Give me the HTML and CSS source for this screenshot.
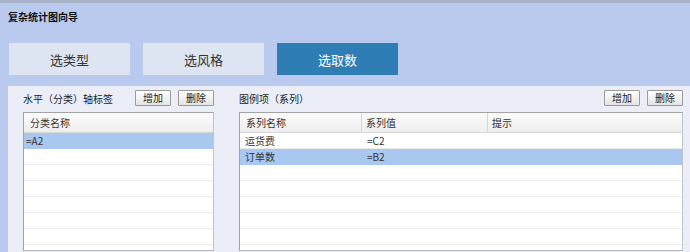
FILE: index.html
```html
<!DOCTYPE html>
<html lang="zh-CN">
<head>
<meta charset="utf-8">
<title>复杂统计图向导</title>
<link rel="stylesheet" href="styles.css">
</head>
<body>
<div class="wizard">
  <div class="title">复杂统计图向导</div>
  <div class="tabs">
    <div class="tab">选类型</div>
    <div class="tab">选风格</div>
    <div class="tab active">选取数</div>
  </div>
  <div class="content">
    <div class="col col-left">
      <div class="toolbar">
        <span class="label">水平（分类）轴标签</span>
        <button class="btn first">增加</button>
        <button class="btn">删除</button>
      </div>
      <div class="grid">
        <div class="row head"><div class="cell">分类名称</div></div>
        <div class="row sel"><div class="cell data">=A2</div></div>
        <div class="row"></div>
        <div class="row"></div>
        <div class="row"></div>
        <div class="row"></div>
        <div class="row"></div>
        <div class="row"></div>
        <div class="row"></div>
      </div>
    </div>
    <div class="col col-right">
      <div class="toolbar">
        <span class="label">图例项（系列）</span>
        <button class="btn first">增加</button>
        <button class="btn">删除</button>
      </div>
      <div class="grid">
        <div class="row head">
          <div class="cell c1">系列名称</div>
          <div class="cell c2">系列值</div>
          <div class="cell c3">提示</div>
        </div>
        <div class="row">
          <div class="cell data c1">运货费</div>
          <div class="cell data c2">=C2</div>
          <div class="cell data c3"></div>
        </div>
        <div class="row sel">
          <div class="cell data c1">订单数</div>
          <div class="cell data c2">=B2</div>
          <div class="cell data c3"></div>
        </div>
        <div class="row"></div>
        <div class="row"></div>
        <div class="row"></div>
        <div class="row"></div>
        <div class="row"></div>
        <div class="row"></div>
      </div>
    </div>
  </div>
</div>
</body>
</html>
```
FILE: styles.css
```css
html, body {
  margin: 0;
  padding: 0;
}
body {
  font-family: "Noto Sans CJK SC", "Liberation Sans", sans-serif;
  color: #222;
  background: #b9caee;
}
.wizard {
  height: 249px;
  background: #b9caee;
  border-top: 3px solid #a9b4c9;
  overflow: hidden;
}
.title {
  font-size: 10px;
  font-weight: bold;
  line-height: 12px;
  padding: 8px 0 0 8px;
  height: 12px;
  color: #111;
}
.tabs {
  display: flex;
  gap: 13px;
  margin: 20px 0 0 9px;
}
.tab {
  width: 121px;
  height: 32px;
  display: flex;
  align-items: center;
  justify-content: center;
  background: #dde5f2;
  color: #333;
  font-size: 13px;
}
.tab.active {
  background: #2f7db5;
  color: #fff;
}
.content {
  margin: 11px 0 0 8px;
  height: 166px;
  background: #eceef7;
  display: flex;
  gap: 25px;
  padding: 4px 7px 0 15px;
  box-sizing: border-box;
}
.col {
  display: flex;
  flex-direction: column;
}
.col-left {
  width: 191px;
}
.col-right {
  flex: 1;
}
.toolbar {
  display: flex;
  align-items: center;
  height: 16px;
  gap: 7px;
}
.label {
  font-size: 10px;
  color: #222;
  margin-left: 0;
}
.btn {
  width: 36px;
  height: 16px;
  padding: 0;
  margin: 0;
  border: 1px solid #9a9a9a;
  border-radius: 1px;
  background: linear-gradient(#ffffff, #e4e4e4);
  font-family: inherit;
  font-size: 10px;
  line-height: 14px;
  color: #222;
}
.btn.first {
  margin-left: auto;
}
.grid {
  margin-top: 6px;
  height: 139px;
  box-sizing: border-box;
  border: 1px solid #a3a3a3;
  border-right-color: #c4c4c4;
  border-bottom-color: #b8b8b8;
  background: #fff;
  overflow: hidden;
}
.row {
  display: flex;
  height: 15px;
  border-bottom: 1px solid #ececec;
}
.row.head {
  height: 19px;
  border-bottom: 1px solid #d6d6d6;
  background: linear-gradient(#fbfbfb, #eeeeee);
}
.row.sel {
  background: #a9c7ef;
  border-bottom-color: #a9c7ef;
}
.cell {
  font-size: 10px;
  line-height: 15px;
  color: #333;
  padding-left: 6px;
  white-space: nowrap;
}
.head .cell {
  line-height: 19px;
}
.cell.data {
  padding-left: 2px;
}
.col-right .cell.data {
  padding-left: 5px;
}
.c1 {
  width: 122px;
  box-sizing: border-box;
}
.c2 {
  width: 126px;
  box-sizing: border-box;
}
.c3 {
  flex: 1;
}
.head .c1, .head .c2 {
  border-right: 1px solid #d6d6d6;
}
.head .c2, .head .c3 {
  padding-left: 4px;
}
```
